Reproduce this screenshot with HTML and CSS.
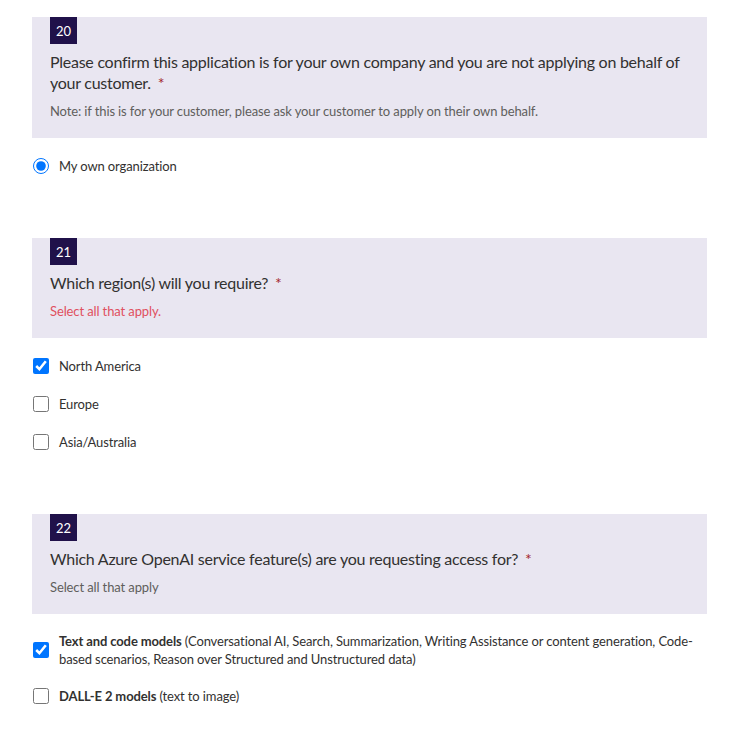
FILE: index.html
```html
<!DOCTYPE html>
<html lang="en">
<head>
<meta charset="utf-8">
<title>Form</title>
<link rel="stylesheet" href="styles.css">
</head>
<body>
<main class="form">
  <section class="question">
    <div class="qbox">
      <div class="badge">20</div>
      <div class="title">Please confirm this application is for your own company and you are not applying on behalf of your customer. <span class="req">*</span></div>
      <div class="note">Note: if this is for your customer, please ask your customer to apply on their own behalf.</div>
    </div>
    <div class="options">
      <label class="option"><input type="radio" name="q20" checked><span class="label">My own organization</span></label>
    </div>
  </section>

  <section class="question">
    <div class="qbox">
      <div class="badge">21</div>
      <div class="title">Which region(s) will you require? <span class="req">*</span></div>
      <div class="note alert">Select all that apply.</div>
    </div>
    <div class="options">
      <label class="option"><input type="checkbox" checked><span class="label">North America</span></label>
      <label class="option"><input type="checkbox"><span class="label">Europe</span></label>
      <label class="option"><input type="checkbox"><span class="label">Asia/Australia</span></label>
    </div>
  </section>

  <section class="question">
    <div class="qbox">
      <div class="badge">22</div>
      <div class="title">Which Azure OpenAI service feature(s) are you requesting access for? <span class="req">*</span></div>
      <div class="note">Select all that apply</div>
    </div>
    <div class="options">
      <label class="option"><input type="checkbox" checked><span class="label"><b>Text and code models</b> (Conversational AI, Search, Summarization, Writing Assistance or content generation, Code-based scenarios, Reason over Structured and Unstructured data)</span></label>
      <label class="option"><input type="checkbox"><span class="label"><b>DALL-E 2 models</b> (text to image)</span></label>
    </div>
  </section>
</main>
</body>
</html>
```
FILE: styles.css
```css
html, body {
  margin: 0;
  padding: 0;
  background: #ffffff;
}
body {
  font-family: "Lato", "Open Sans", sans-serif;
  color: #333333;
}
.form {
  width: 675px;
  margin-left: 32px;
  padding-top: 17px;
}
.question {
  margin-bottom: 62px;
}
.qbox {
  background: #e9e6f1;
  padding: 0 18px 18px;
}
.badge {
  width: 27px;
  height: 27px;
  background: #20114a;
  color: #ffffff;
  font-size: 13px;
  display: flex;
  align-items: center;
  justify-content: center;
}
.title {
  margin-top: 7px;
  font-size: 16px;
  line-height: 21px;
  letter-spacing: -0.26px;
  color: #323130;
}
.req {
  color: #a4262c;
  margin-left: 3px;
}
.note {
  margin-top: 9px;
  font-size: 13px;
  line-height: 18px;
  letter-spacing: -0.12px;
  color: #605e5c;
}
.note.alert {
  color: #e0505f;
}
.options {
  padding-top: 18px;
  display: flex;
  flex-direction: column;
  gap: 18px;
}
.option {
  display: flex;
  align-items: center;
  gap: 10px;
  min-height: 20px;
  font-size: 13px;
  line-height: 18px;
  letter-spacing: -0.12px;
  color: #323130;
}
.option input {
  margin: 0 0 0 1px;
  width: 16px;
  height: 16px;
  flex: none;
}
.option b {
  font-weight: 700;
}
```
